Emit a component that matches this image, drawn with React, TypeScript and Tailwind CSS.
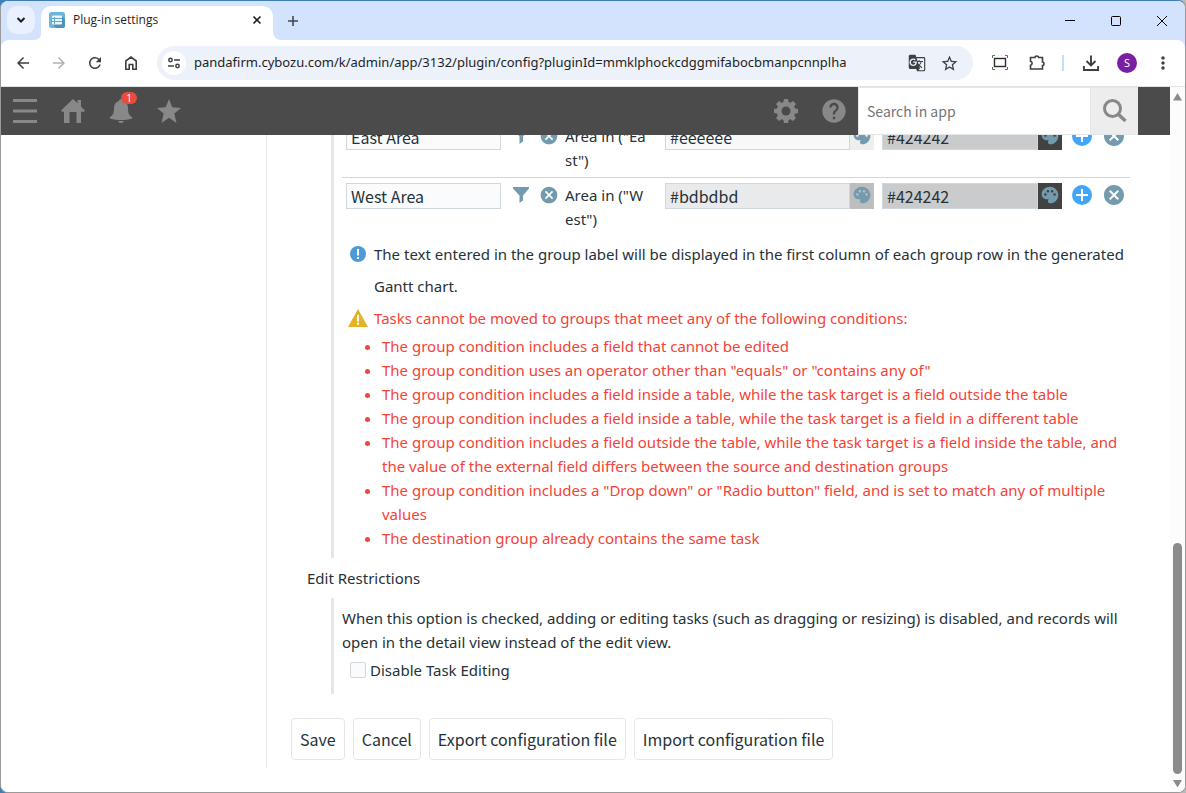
import React from "react";
import {
  MdCancel,
  MdPalette,
  MdArrowBack,
  MdArrowForward,
  MdRefresh,
  MdStarBorder,
  MdMoreVert,
  MdHelp,
  MdGTranslate,
} from "react-icons/md";

const sans = "font-['Open_Sans','Noto_Sans',sans-serif]";
const cjk = "font-['Noto_Sans_CJK_JP','Noto_Sans',sans-serif]";

function TabStrip() {
  return (
    <div className="flex h-[39px] shrink-0 items-stretch bg-[#d3e3fd]">
      <button
        aria-label="Search tabs"
        className="mt-[5px] ml-1.5 flex size-7 items-center justify-center rounded-[10px] bg-[#e9f1fe] text-[#1f1f1f]"
      >
        <svg viewBox="0 0 10 10" className="size-2.5" fill="none" stroke="currentColor" strokeWidth="2">
          <path d="M1.5 3 5 6.5 8.5 3" />
        </svg>
      </button>
      <svg viewBox="0 0 8 8" className="-ml-px size-2 self-end text-white">
        <path d="M8 0v8H0a8 8 0 0 0 8-8Z" fill="currentColor" />
      </svg>
      <div className="mt-[5px] -ml-px flex w-8 max-w-[232px] grow items-center rounded-t-[10px] bg-white pr-2.5 pb-1.5 pl-2">
        <svg viewBox="0 0 16 16" className="size-4">
          <rect width="16" height="16" rx="2.5" fill="#6fb4dc" />
          <path d="m13 4 3 3v6.500a2.500 2.500 0 0 1-2.500 2.500H7l-3-3Z" fill="#4c93c0" />
          <rect x="3" y="3.500" width="10" height="9" rx="1" fill="#eaf5fb" />
          <path d="M3 6.500h10M3 9.500h10M5.500 5v7" stroke="#5fa5cf" strokeWidth="1" />
        </svg>
        <span className="ml-2 grow text-xs whitespace-nowrap text-[#1f1f1f]">Plug-in settings</span>
        <button aria-label="Close tab" className="flex size-3 items-center justify-center text-[#1f1f1f]">
          <svg viewBox="0 0 10 10" className="size-2.5" stroke="currentColor" strokeWidth="1.6">
            <path d="m1.500 1.500 7 7m0-7-7 7" />
          </svg>
        </button>
      </div>
      <svg viewBox="0 0 8 8" className="size-2 self-end text-white">
        <path d="M0 0v8h8a8 8 0 0 1-8-8Z" fill="currentColor" />
      </svg>
      <button aria-label="New tab" className="ml-1.5 flex w-3 items-center text-[#444746]">
        <svg viewBox="0 0 12 12" className="size-3" stroke="currentColor" strokeWidth="1.6">
          <path d="M6 1v10M1 6h10" />
        </svg>
      </button>
      <div className="ml-auto flex items-center gap-9 pr-[18px] text-black">
        <button aria-label="Minimize">
          <svg viewBox="0 0 10 10" className="size-2.5" stroke="currentColor">
            <path d="M0 4.500h10" />
          </svg>
        </button>
        <button aria-label="Maximize">
          <svg viewBox="0 0 10 10" className="size-2.5" fill="none" stroke="currentColor">
            <rect x=".5" y=".5" width="9" height="9" rx="1" />
          </svg>
        </button>
        <button aria-label="Close">
          <svg viewBox="0 0 10 10" className="size-2.5" stroke="currentColor">
            <path d="m0 0 10 10M10 0 0 10" />
          </svg>
        </button>
      </div>
    </div>
  );
}

function AddressBar() {
  return (
    <div className="flex h-[46px] shrink-0 items-center rounded-t-lg bg-white pl-[13px] text-[#3c4043]">
      <button aria-label="Back"><MdArrowBack className="size-[18px]" /></button>
      <button aria-label="Forward" className="ml-[18px] text-[#b0b1b3]"><MdArrowForward className="size-[18px]" /></button>
      <button aria-label="Reload" className="ml-[18px]"><MdRefresh className="size-[18px]" /></button>
      <button aria-label="Home" className="ml-[18px]">
        <svg viewBox="0 0 18 18" className="size-[18px]" fill="none" stroke="currentColor" strokeWidth="1.6">
          <path d="M3.800 15.200V7L9 3l5.200 4v8.200h-3.400v-4.700H7.200v4.700Z" />
        </svg>
      </button>
      <div className="ml-[17px] flex h-[34px] grow items-center rounded-full bg-[#ecf1fa] pr-3.5 pl-[5px]">
        <button aria-label="View site information" className="flex size-6 items-center justify-center rounded-full bg-white">
          <svg viewBox="0 0 14 14" className="size-3.5" fill="none" stroke="currentColor" strokeWidth="1.500">
            <circle cx="3.500" cy="4" r="1.700" />
            <circle cx="10.500" cy="10" r="1.700" />
            <path d="M7 4h6M1 10h6" />
          </svg>
        </button>
        <input
          aria-label="Address"
          readOnly
          value="pandafirm.cybozu.com/k/admin/app/3132/plugin/config?pluginId=mmklphockcdggmifabocbmanpcnnplha"
          className="ml-2 min-w-0 grow bg-transparent font-['Noto_Sans',sans-serif] text-[13px] text-[#1f1f1f] outline-none"
        />
        <button aria-label="Translate this page"><MdGTranslate className="size-[18px]" /></button>
        <button aria-label="Bookmark this tab" className="ml-3.5"><MdStarBorder className="size-[19px]" /></button>
      </div>
      <div className="flex items-center pr-3 pl-[18px]">
        <button aria-label="Screen capture">
          <svg viewBox="0 0 18 18" className="size-[18px]" fill="none">
            <rect x="3.500" y="4.500" width="11" height="8" stroke="#2b2b2b" strokeWidth="1.400" />
            <path d="M1.500 4V1.500H4M14 1.500h2.500V4M16.500 13v2.500H14M4 15.500H1.500V13" stroke="#3f8a3a" strokeWidth="1" />
          </svg>
        </button>
        <button aria-label="Extensions" className="ml-[19px]">
          <svg viewBox="0 0 18 18" className="size-[18px]" fill="none" stroke="currentColor" strokeWidth="1.600">
            <path d="M2.500 3.500H7a1.800 1.500 0 0 1 3.600 0h3.900V8a1.500 1.800 0 0 1 0 3.600V15H2.500v-3.600a2.100 2.100 0 0 0 0-4.100Z" />
          </svg>
        </button>
        <span className="ml-4 h-4 w-0.5 bg-[#c9dcfb]" />
        <button aria-label="Downloads" className="ml-[18px]">
          <svg viewBox="0 0 18 18" className="size-[18px]" fill="none" stroke="currentColor" strokeWidth="1.900">
            <path d="M9 1.500V11M4.500 7 9 11.500 13.500 7M1.900 12v4h14.200v-4" />
          </svg>
        </button>
        <button className={`ml-[17px] size-5 rounded-full bg-[#7b1fa2] text-[11px] leading-5 text-white ${sans}`}>S</button>
        <button aria-label="Menu" className="ml-4"><MdMoreVert className="size-5" /></button>
      </div>
    </div>
  );
}

function AppHeader() {
  return (
    <header className="relative z-10 flex h-12 shrink-0 items-center bg-[#4b4b4b] pl-3 text-[#888888]">
      <button aria-label="Menu">
        <svg viewBox="0 0 24 24" className="size-6" fill="currentColor">
          <path d="M0 0h24v3H0zM0 10.500h24v3H0zM0 21h24v3H0z" />
        </svg>
      </button>
      <a href="#home" aria-label="Home" className="ml-6">
        <svg viewBox="0 0 24 24" className="size-6" fill="currentColor">
          <path d="M12 0 0 11.500 1 12.800H3V24h5.500V13h7v11H20V12.800h3L24 11.500l-4-3.800V1h-3.500v3.300Z" />
        </svg>
      </a>
      <button aria-label="Notifications" className="relative ml-6">
        <svg viewBox="0 0 24 24" className="size-6" fill="currentColor">
          <path d="M12 0c1.300 0 2 .8 2 2 3.400.9 5 3.500 5 7 0 5 1.200 7.600 4 9.300.5.500.4 1.300-.5 1.500-6 1.600-15 1.600-21 0-.9-.2-1-1-.5-1.500C3.800 16.600 5 14 5 9c0-3.500 1.600-6.100 5-7 0-1.200.7-2 2-2ZM9 22h6c-.5 1.300-1.500 1.900-3 1.900S9.500 23.300 9 22Z" />
        </svg>
        <span className="absolute -top-[7px] left-3 h-3 w-4 rounded-full bg-[#e74c3c] text-center text-[10px] leading-3 text-white">1</span>
      </button>
      <a href="#favorites" aria-label="Favorites" className="ml-6">
        <svg viewBox="0 0 24 24" className="size-6" fill="currentColor">
          <path d="m12 0 3.300 8.300 8.700.6-6.700 5.700L19.500 24 12 18.800 4.500 24l2.200-9.400L0 8.900l8.700-.6Z" />
        </svg>
      </a>
      <button aria-label="Settings" className="ml-auto">
        <svg viewBox="0 0 24 24" className="size-6">
          <g fill="currentColor">
            <circle cx="12" cy="12" r="9.300" />
            <path d="M10 0h4l.8 4H9.200zM10 24h4l.8-4H9.200zM0 10v4l4 .8V9.200zM24 10v4l-4 .8V9.200z" />
            <path d="M10 0h4l.8 4H9.200zM10 24h4l.8-4H9.200zM0 10v4l4 .8V9.200zM24 10v4l-4 .8V9.200z" transform="rotate(45 12 12)" />
          </g>
          <circle cx="12" cy="12" r="4.500" fill="#4b4b4b" />
        </svg>
      </button>
      <button aria-label="Help" className="mr-2.5 ml-[22px]"><MdHelp className="size-7" /></button>
      <form className="mr-8 flex h-full" onSubmit={(e) => e.preventDefault()}>
        <input
          type="search"
          aria-label="Search in app"
          placeholder="Search in app"
          className={`w-[232px] border-y border-l border-[#e3e7e8] bg-white px-2 text-sm text-[#333333] outline-none placeholder:text-[#757575] ${cjk}`}
        />
        <button aria-label="Search" className="flex w-12 items-center justify-center border-y border-l border-[#e3e7e8] bg-[#ededed]">
          <svg viewBox="0 0 24 24" className="size-6" fill="none" stroke="currentColor" strokeWidth="3">
            <circle cx="9.500" cy="9.500" r="8" />
            <path d="m15 15 7.500 7" strokeWidth="3.500" />
          </svg>
        </button>
      </form>
    </header>
  );
}

const inputClass = `h-[26px] min-w-0 border border-[#cfd8dc] px-1 text-base text-[#263238] outline-none ${cjk}`;

function GroupRow({ label, condition, fill, fillInput, fillButton }: {
  label: string;
  condition: string;
  fill: string;
  fillInput: string;
  fillButton: string;
}) {
  return (
    <tr className="border-t border-[#cfd8dc] align-top">
      <td className="px-1 py-[5px]">
        <input aria-label="Group label" defaultValue={label} className={`${inputClass} block w-full bg-[#fafbfd]`} />
      </td>
      <td className="px-1 py-[5px]">
        <div className="flex items-start pr-2 pl-1 text-[#739bad]">
          <button aria-label="Edit condition" className="mt-1">
            <svg viewBox="0 0 16 16" className="size-4" fill="currentColor">
              <path d="M0 0h16v1.500L10 8.500v5L6.500 16V8.500L0 1.500Z" />
            </svg>
          </button>
          <button aria-label="Clear condition" className="mt-0.5 ml-2.5"><MdCancel className="size-5" /></button>
          <span className="ml-1.5 min-w-0 grow text-[15px] leading-6 break-all text-[#263238]">{condition}</span>
        </div>
      </td>
      <td className="px-1 py-[5px]">
        <div className="flex">
          <input aria-label="Background color" defaultValue={fill} className={`${inputClass} grow ${fillInput}`} />
          <button aria-label="Pick background color" className={`flex h-[26px] w-6 shrink-0 justify-center pt-0.5 text-[#739bad] ${fillButton}`}>
            <MdPalette className="size-5 -scale-x-100" />
          </button>
        </div>
      </td>
      <td className="px-1 py-[5px]">
        <div className="flex">
          <input aria-label="Text color" defaultValue="#424242" className={`${inputClass} grow bg-[#cacbcc]`} />
          <button aria-label="Pick text color" className="flex h-[26px] w-6 shrink-0 justify-center bg-[#424242] pt-0.5 text-[#739bad]">
            <MdPalette className="size-5 -scale-x-100" />
          </button>
        </div>
      </td>
      <td className="py-[5px]">
        <div className="flex gap-2 pl-1">
          <button aria-label="Add row">
            <svg viewBox="0 0 24 24" className="size-6">
              <circle cx="12" cy="12" r="10" fill="#42a5f5" />
              <path d="M12 6v12M6 12h12" stroke="#fff" strokeWidth="2" />
            </svg>
          </button>
          <button aria-label="Remove row" className="text-[#739bad]"><MdCancel className="size-6" /></button>
        </div>
      </td>
    </tr>
  );
}

const conditions = [
  "The group condition includes a field that cannot be edited",
  'The group condition uses an operator other than "equals" or "contains any of"',
  "The group condition includes a field inside a table, while the task target is a field outside the table",
  "The group condition includes a field inside a table, while the task target is a field in a different table",
  "The group condition includes a field outside the table, while the task target is a field inside the table, and the value of the external field differs between the source and destination groups",
  'The group condition includes a "Drop down" or "Radio button" field, and is set to match any of multiple values',
  "The destination group already contains the same task",
];

const actions = ["Save", "Cancel", "Export configuration file", "Import configuration file"];

function Settings() {
  return (
    <main className="-mt-[17px] ml-[265px] border-l border-[#e3e7e8] pr-8 pb-2 pl-6 font-['Noto_Sans',sans-serif] text-[15px] leading-6 text-[#263238]">
      <section className="ml-10 border-l-3 border-[#e3e7e8] px-2 pb-2">
        <table className="w-full table-fixed border-collapse">
          <colgroup>
            <col className="w-[163px]" />
            <col className="w-[156px]" />
            <col />
            <col className="w-[188px]" />
            <col className="w-16" />
          </colgroup>
          <tbody>
            <GroupRow label="East Area" condition={'Area in ("East")'} fill="#eeeeee" fillInput="bg-[#f7f8fa]" fillButton="bg-[#eeeeee]" />
            <GroupRow label="West Area" condition={'Area in ("West")'} fill="#bdbdbd" fillInput="bg-[#e9eaeb]" fillButton="bg-[#bdbdbd]" />
          </tbody>
        </table>
        <p className="flex pt-0.5 pl-2 leading-8">
          <svg viewBox="0 0 16 16" className="mt-2 mr-2 size-4 shrink-0">
            <circle cx="8" cy="8" r="8" fill="#4d9bd6" />
            <path d="M7 3h2v6.500H7zM7 11h2v2H7z" fill="#fff" />
          </svg>
          The text entered in the group label will be displayed in the first column of each group row in the generated Gantt chart.
        </p>
        <p className="flex pl-1.5 leading-8 text-[#f44336]">
          <svg viewBox="0 0 20 18" className="mt-[7px] mr-1.5 h-[18px] w-5 shrink-0">
            <path d="M10 0 20 18H0Z" fill="#e3b428" />
            <path d="M9 6h2v6.500H9zM9 13.700h2v2H9z" fill="#fff" />
          </svg>
          Tasks cannot be moved to groups that meet any of the following conditions:
        </p>
        <ul className="list-disc pl-10 text-[#f44336]">
          {conditions.map((c) => (
            <li key={c}>{c}</li>
          ))}
        </ul>
      </section>
      <h2 className="mt-2 ml-4">Edit Restrictions</h2>
      <section className="mt-2 ml-10 border-l-3 border-[#e3e7e8] p-2">
        <p>
          When this option is checked, adding or editing tasks (such as dragging or resizing) is disabled, and records will open in the detail view instead of the edit view.
        </p>
        <label className="mt-1 mb-1 flex items-center gap-1 pl-2">
          <input type="checkbox" className="size-4 appearance-none rounded-xs border border-[#cfd8dc] bg-[#fafbfd]" />
          Disable Task Editing
        </label>
      </section>
      <div className="mt-6 flex gap-2">
        {actions.map((a) => (
          <button key={a} className={`h-[42px] rounded-sm border border-[#e3e7e8] bg-white px-2 text-base whitespace-nowrap ${cjk}`}>
            {a}
          </button>
        ))}
      </div>
    </main>
  );
}

function Scrollbar() {
  return (
    <div className="flex w-[15px] shrink-0 flex-col items-center bg-[#fcfcfc] pt-1.5 pb-1 text-[#8b8b8b]">
      <svg viewBox="0 0 9 8" className="h-2 w-[9px]" fill="currentColor"><path d="M4.500 0 9 7.500H0Z" /></svg>
      <div className="grow-[442]" />
      <div className="w-[9px] grow-[231] rounded-full bg-[#8b8b8b]" />
      <div className="h-1.5" />
      <svg viewBox="0 0 9 8" className="h-2 w-[9px]" fill="currentColor"><path d="M0 0h9L4.500 7.500Z" /></svg>
    </div>
  );
}

export default function App() {
  return (
    <div className="h-screen bg-linear-to-r from-[#3a80bd] from-85% to-[#b8b8b8] to-90%">
      <div className={`flex h-full flex-col overflow-hidden rounded-lg border border-t-[#3f7fb5] border-r-[#9a9a9a] border-b-[#9a9a9a] border-l-[#9a9a9a] bg-[#d3e3fd] ${sans}`}>
        <TabStrip />
        <AddressBar />
        <div className="flex min-h-0 grow border-t border-[#dfe3e3] bg-white">
          <div className="flex min-w-0 grow flex-col overflow-hidden">
            <AppHeader />
            <Settings />
          </div>
          <Scrollbar />
        </div>
      </div>
    </div>
  );
}
